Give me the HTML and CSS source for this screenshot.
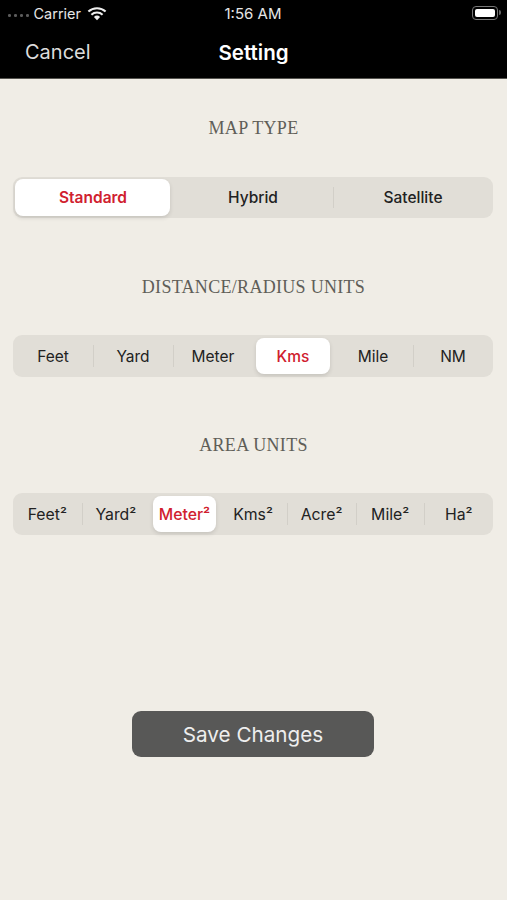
FILE: index.html
```html
<!DOCTYPE html>
<html lang="en">
<head>
    <meta charset="UTF-8">
    <meta name="viewport" content="width=device-width, initial-scale=1.0">
    <title>Setting</title>
    <link rel="stylesheet" href="styles.css">
</head>
<body>
    <header class="topbar">
        <div class="status">
            <div class="status-left">
                <span class="dots"><i></i><i></i><i></i><i></i></span>
                <span class="carrier">Carrier</span>
                <svg class="wifi" width="20" height="15" viewBox="0 0 20 15">
                    <path d="M10 14.2 6.9 10.9a4.6 4.6 0 0 1 6.2 0z" fill="#eee"/>
                    <path d="M1.4 5.6a12.6 12.6 0 0 1 17.2 0M4.4 8.7a8.3 8.3 0 0 1 11.2 0" fill="none" stroke="#eee" stroke-width="2.1"/>
                </svg>
            </div>
            <span class="clock">1:56 AM</span>
            <div class="battery"><span class="battery-fill"></span></div>
        </div>
        <nav class="navbar">
            <span class="cancel">Cancel</span>
            <span class="title">Setting</span>
        </nav>
    </header>

    <main class="content">
        <section class="group group-map">
            <h2>MAP TYPE</h2>
            <div class="segments">
                <span class="seg active">Standard</span>
                <span class="seg">Hybrid</span>
                <span class="seg divided">Satellite</span>
            </div>
        </section>

        <section class="group group-distance">
            <h2>DISTANCE/RADIUS UNITS</h2>
            <div class="segments">
                <span class="seg">Feet</span>
                <span class="seg divided">Yard</span>
                <span class="seg divided">Meter</span>
                <span class="seg active">Kms</span>
                <span class="seg">Mile</span>
                <span class="seg divided">NM</span>
            </div>
        </section>

        <section class="group group-area">
            <h2>AREA UNITS</h2>
            <div class="segments">
                <span class="seg">Feet²</span>
                <span class="seg divided">Yard²</span>
                <span class="seg active">Meter²</span>
                <span class="seg">Kms²</span>
                <span class="seg divided">Acre²</span>
                <span class="seg divided">Mile²</span>
                <span class="seg divided">Ha²</span>
            </div>
        </section>

        <button class="save">Save Changes</button>
    </main>
</body>
</html>
```

FILE: styles.css
```css
* {
    box-sizing: border-box;
}
html, body {
    height: 100%;
}
body {
    margin: 0;
    font-family: Inter, "Liberation Sans", sans-serif;
    background-color: #f0ede6;
    overflow: hidden;
}
.topbar {
    height: 79px;
    background-color: #000;
    border-bottom: 1px solid #55544f;
    color: #fff;
}
.status {
    height: 26px;
    padding: 0 9px 0 8px;
    display: grid;
    grid-template-columns: 1fr auto 1fr;
    align-items: center;
    font-size: 14.5px;
    color: #e6e6e6;
}
.status-left {
    display: flex;
    align-items: center;
}
.dots {
    display: flex;
    gap: 3.5px;
    margin-top: 5px;
    margin-right: 5px;
}
.dots i {
    width: 2.5px;
    height: 2.5px;
    border-radius: 50%;
    background-color: #5c5c5c;
}
.wifi {
    margin-left: 6px;
}
.clock {
    font-size: 15px;
}
.battery {
    position: relative;
    justify-self: end;
    width: 26px;
    height: 14px;
    padding: 2px;
    border: 1.5px solid #777;
    border-radius: 4px;
}
.battery::after {
    content: "";
    position: absolute;
    right: -4px;
    top: 3px;
    width: 2px;
    height: 5px;
    background-color: #666;
    border-radius: 0 2px 2px 0;
}
.battery-fill {
    display: block;
    height: 100%;
    background-color: #fff;
    border-radius: 2px;
}
.navbar {
    position: relative;
    height: 52px;
    display: flex;
    align-items: center;
    justify-content: center;
}
.cancel {
    position: absolute;
    left: 25px;
    font-size: 20px;
    color: #dcdcdc;
}
.title {
    font-size: 20.5px;
    font-weight: 600;
}
.content {
    padding: 0 14px 0 13px;
    display: flex;
    flex-direction: column;
}
.group h2 {
    margin: 0 -1px 0 0;
    text-align: center;
    font-family: "Liberation Serif", serif;
    font-size: 18px;
    font-weight: 400;
    letter-spacing: 0.3px;
    line-height: 20px;
    color: #5f5e58;
}
.group-map {
    padding-top: 39px;
}
.group-distance {
    padding-top: 59px;
}
.group-area {
    padding-top: 58px;
}
.segments {
    height: 42px;
    margin-top: 38px;
    display: flex;
    isolation: isolate;
    background-color: #e1ded7;
    border-radius: 9px;
}
.group-map .segments {
    height: 41px;
    margin-top: 39px;
}
.seg {
    flex: 1 1 0;
    display: flex;
    align-items: center;
    justify-content: center;
    position: relative;
    font-size: 15.5px;
    font-weight: 400;
    color: #222;
}
.group-map .seg {
    font-weight: 500;
}
.group-area .seg {
    font-size: 15.8px;
}
.seg.divided::before {
    content: "";
    position: absolute;
    left: 0;
    top: 10px;
    bottom: 10px;
    width: 1px;
    background-color: #d2cfc8;
}
.seg.active {
    color: #d0202e;
    font-weight: 500;
}
.group-map .seg.active {
    font-weight: 600;
}
.seg.active::before {
    content: "";
    position: absolute;
    inset: 3px;
    z-index: -1;
    background-color: #fff;
    border-radius: 8px;
    box-shadow: 0 2px 4px rgba(0,0,0,0.12);
}
.group-map .seg.active::before {
    inset: 2px 3px 2px 2px;
}
.save {
    width: 242px;
    height: 46px;
    margin: 176px auto 0;
    background-color: #585857;
    color: #eee;
    border: none;
    border-radius: 9px;
    font-family: inherit;
    font-size: 20.7px;
}
```
